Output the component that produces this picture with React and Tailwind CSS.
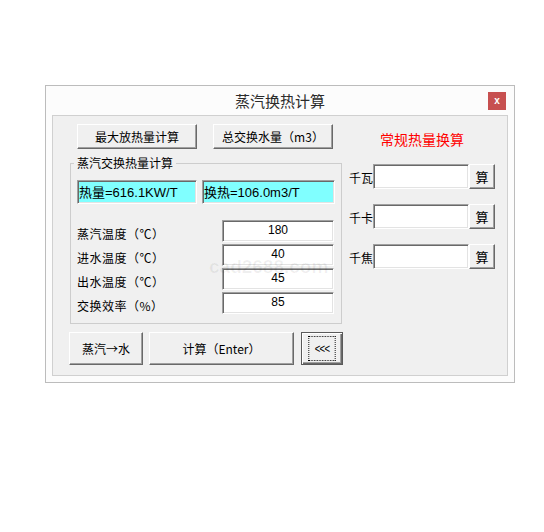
const cjk = "font-['Noto_Sans_CJK_SC','Noto_Sans',sans-serif]"

function RaisedButton({ className = '', children }) {
  return (
    <button
      className={`flex items-center justify-center border border-t-white border-l-white border-r-[#696969] border-b-[#696969] bg-[#f0f0f0] shadow-[inset_-1px_-1px_0_#a0a0a0] text-[12px] leading-none text-black ${className}`}
    >
      {children}
    </button>
  )
}

function Sunken({ className = '', children }) {
  return (
    <div
      className={`border border-t-[#a0a0a0] border-l-[#a0a0a0] border-r-white border-b-white shadow-[inset_1px_1px_0_#696969,inset_-1px_-1px_0_#e3e3e3] ${className}`}
    >
      {children}
    </div>
  )
}

const params = [
  ['蒸汽温度（℃）', '180'],
  ['进水温度（℃）', '40'],
  ['出水温度（℃）', '45'],
  ['交换效率（%）', '85'],
]

const units = ['千瓦', '千卡', '千焦']

export default function App() {
  return (
    <div className={`w-[544px] h-[532px] bg-white pt-[85px] pl-[45px] ${cjk}`}>
      <div className="w-[470px] h-[298px] border border-[#bcbcbc] bg-[#fcfcfc] flex flex-col">
        {/* title bar */}
        <div className="h-[29px] flex items-center pl-[26px] pr-[8px]">
          <div className="flex-1 text-center text-[15px] leading-none text-[#2b2b2b]">蒸汽换热计算</div>
          <div className="w-[18px] h-[18px] bg-[#c75050] flex items-center justify-center text-white text-[10px] font-bold leading-none font-['Liberation_Sans',sans-serif]">
            x
          </div>
        </div>

        <div className="relative mx-[6px] h-[261px] border border-[#d0d0d0] bg-[#f0f0f0] flex pl-[16px]">
          {/* left column */}
          <div className="w-[274px] flex flex-col pt-[8px]">
            <div className="flex gap-[16px] ml-[8px]">
              <RaisedButton className="w-[120px] h-[25px]">最大放热量计算</RaisedButton>
              <RaisedButton className="w-[120px] h-[25px]">总交换水量（m3）</RaisedButton>
            </div>

            <fieldset className="mt-[7px] ml-[1px] w-[272px] border border-[#cdcdcd] pb-[9px]">
              <legend className="ml-[3px] px-[3px] text-[12px] leading-[14px] text-black">蒸汽交换热量计算</legend>
              <div className="mt-[10px] ml-[6px] flex gap-[5px] font-['Liberation_Sans','Noto_Sans_CJK_SC',sans-serif] text-[13px] text-black">
                <Sunken className="w-[120px] h-[24px] bg-[#80ffff] pl-[1px] flex items-center leading-none">热量=616.1KW/T</Sunken>
                <Sunken className="w-[133px] h-[24px] bg-[#80ffff] pl-[1px] flex items-center leading-none">换热=106.0m3/T</Sunken>
              </div>
              <div className="mt-[16px] flex flex-col gap-[2px]">
                {params.map(([label, val]) => (
                  <div key={label} className="h-[22px] flex items-center justify-between">
                    <span className="ml-[6px] mt-[5px] text-[12px] leading-none text-black tracking-[0.5px]">{label}</span>
                    <Sunken className="w-[112px] h-[22px] mr-[7px] bg-white flex items-start justify-center pt-[3px] text-[12px] leading-none text-black font-['Liberation_Sans',sans-serif]">
                      {val}
                    </Sunken>
                  </div>
                ))}
              </div>
            </fieldset>

            <div className="mt-[8px] flex">
              <RaisedButton className="w-[74px] h-[33px]">蒸汽→水</RaisedButton>
              <RaisedButton className="ml-[6px] w-[145px] h-[33px]">计算（Enter）</RaisedButton>
              <button className="ml-[7px] w-[42px] h-[33px] border border-[#5a5a5a] bg-[#f0f0f0] shadow-[inset_1px_1px_0_#ffffff,inset_-1px_-1px_0_#696969,inset_-2px_-2px_0_#a0a0a0] p-[3px]">
                <div className="w-full h-full border border-dotted border-black flex items-center justify-center text-[12px] leading-none text-black font-['Liberation_Sans',sans-serif] tracking-[-1px] scale-x-[0.8]">
                  &lt;&lt;&lt;
                </div>
              </button>
            </div>
          </div>

          {/* right column */}
          <div className="ml-[6px] w-[146px] flex flex-col pt-[13px]">
            <div className="text-center text-[14px] leading-[20px] text-[#ff0000]">常规热量换算</div>
            <div className="mt-[15px] flex flex-col gap-[15px]">
              {units.map((u) => (
                <div key={u} className="h-[25px] flex items-center">
                  <span className="w-[24px] mt-[3px] text-[12px] leading-none text-black">{u}</span>
                  <Sunken className="w-[96px] h-[25px] bg-white" />
                  <RaisedButton className="w-[26px] h-[25px] text-[13px]">算</RaisedButton>
                </div>
              ))}
            </div>
          </div>

          <span className="pointer-events-none absolute left-[156px] top-[141px] text-[19px] font-bold leading-none text-black/[0.06] font-['Liberation_Sans',sans-serif]">
            cad2688.com
          </span>
        </div>
      </div>
    </div>
  )
}
